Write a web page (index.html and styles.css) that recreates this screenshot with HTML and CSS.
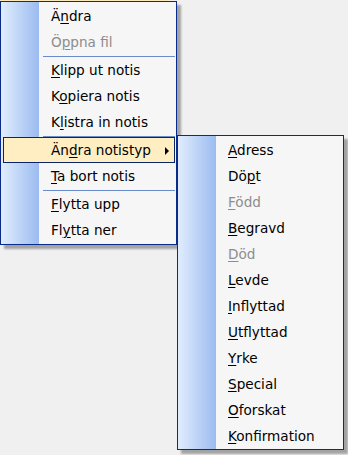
FILE: index.html
```html
<!DOCTYPE html>
<html>
<head>
  <title>Notis meny</title>
  <link rel="stylesheet" href="styles.css">
</head>
<body>

<div class="desk">
<div class="strip"></div>

<div class="menu main">
  <div class="item">Ä<u>n</u>dra</div>
  <div class="item off">Ö<u>p</u>pna fil</div>
  <div class="sep"></div>
  <div class="item"><u>K</u>lipp ut notis</div>
  <div class="item">K<u>o</u>piera notis</div>
  <div class="item">K<u>l</u>istra in notis</div>
  <div class="sep"></div>
  <div class="item hot">Än<u>d</u>ra notistyp<span class="arrow"></span></div>
  <div class="item"><u>T</u>a bort notis</div>
  <div class="sep"></div>
  <div class="item"><u>F</u>lytta upp</div>
  <div class="item">Fl<u>y</u>tta ner</div>
</div>

<!-- undermeny for notistyp -->
<div class="menu sub">
  <div class="item"><u>A</u>dress</div>
  <div class="item">Dö<u>p</u>t</div>
  <div class="item off"><u>F</u>ödd</div>
  <div class="item"><u>B</u>egravd</div>
  <div class="item off"><u>D</u>öd</div>
  <div class="item"><u>L</u>evde</div>
  <div class="item"><u>I</u>nflyttad</div>
  <div class="item"><u>U</u>tflyttad</div>
  <div class="item"><u>Y</u>rke</div>
  <div class="item"><u>S</u>pecial</div>
  <div class="item"><u>O</u>forskat</div>
  <div class="item"><u>K</u>onfirmation</div>
</div>
</div>

</body>
</html>
```

FILE: styles.css
```css
BODY { margin: 0; background: #f0f0f0; font-family: "DejaVu Sans", Tahoma, sans-serif; font-size: 13.6px; color: #000 }
.desk { position: relative; width: 348px; height: 455px }
.strip { height: 1px; width: 169px; background: #fbe9bd }

.menu { box-sizing: border-box; border: 1px solid #0a2a8c; padding: 1px 0 0 0;
        background: linear-gradient(to right, #e1edfd 0, #9bbbf0 38px, #f6f6f6 38px);
        box-shadow: 4px 4px 2px rgba(0,0,0,0.32) }
.main { width: 177px; height: 244px }
.sub { position: absolute; left: 177px; top: 135px; width: 167px; height: 315px }

.item { position: relative; height: 24px; line-height: 24px; margin: 0 1px 0 2px;
        padding-left: 47px; border: 1px solid transparent; white-space: nowrap }
.item U { text-decoration-thickness: 1px; text-underline-offset: 2px }
.off { color: #8d8d8d }
.hot { background: #ffeec2; border-color: #0a246a }

.arrow { position: absolute; right: 5px; top: 9px; width: 0; height: 0;
         border-left: 4px solid #000; border-top: 4px solid transparent; border-bottom: 4px solid transparent }

.sep { height: 1px; margin: 1px 1px 0 42px; background: #6a8ccb }
```
